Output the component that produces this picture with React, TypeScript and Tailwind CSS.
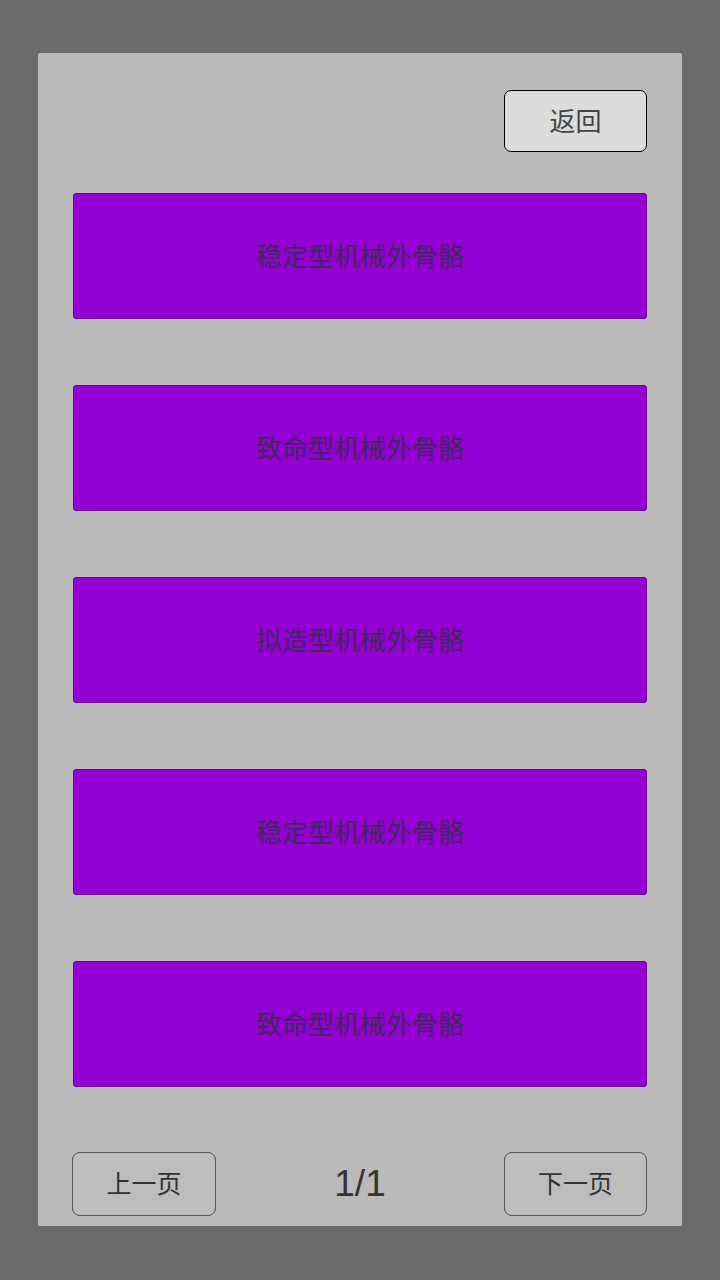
const FONT = '"Noto Sans CJK SC", "Liberation Sans", sans-serif'

const items = ['稳定型机械外骨骼', '致命型机械外骨骼', '拟造型机械外骨骼', '稳定型机械外骨骼', '致命型机械外骨骼']

export default function App() {
  return (
    <div className="w-[720px] h-[1280px] bg-[#6b6b6b] pt-[53px] pl-[38px]" style={{ fontFamily: FONT }}>
      <div className="w-[644px] h-[1173px] bg-[#bababa] rounded-[2px] flex flex-col px-[35px]">
        {/* 返回 */}
        <div className="flex justify-end pt-[37px]">
          <button className="w-[143px] h-[62px] pb-[3px] bg-[#dcdcdc] border border-black rounded-[7px] text-[26px] text-[#444]">
            返回
          </button>
        </div>

        {/* list */}
        <div className="flex flex-col gap-[66px] mt-[41px]">
          {items.map((name, i) => (
            <div
              key={i}
              className="h-[126px] w-[574px] pb-[3px] bg-[#9400d3] border border-[#6a0098] rounded-[3px] flex items-center justify-center text-[26px] text-[#40275a]"
            >
              {name}
            </div>
          ))}
        </div>

        {/* pager */}
        <div className="flex items-center justify-between mt-[65px]">
          <button className="-ml-px w-[144px] h-[64px] pb-[2px] bg-[#bdbdbd] border border-[#555] rounded-[8px] text-[25px] text-[#333]">
            上一页
          </button>
          <span className="text-[37px] text-[#333]" style={{ fontFamily: '"Liberation Sans", sans-serif' }}>1/1</span>
          <button className="w-[143px] h-[64px] pb-[2px] bg-[#bdbdbd] border border-[#555] rounded-[8px] text-[25px] text-[#333]">
            下一页
          </button>
        </div>
      </div>
    </div>
  )
}
